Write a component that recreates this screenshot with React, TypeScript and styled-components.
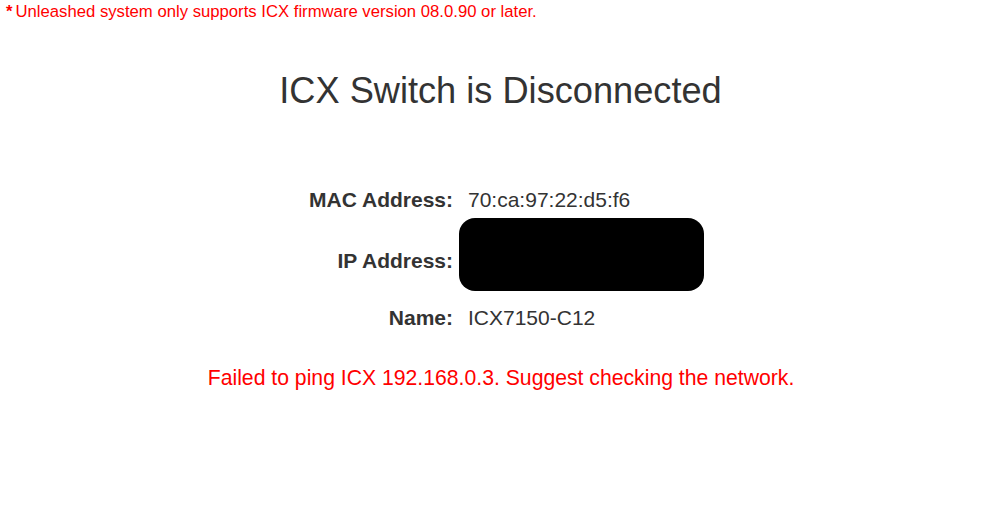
import React from "react";
import styled, { createGlobalStyle } from "styled-components";

const Global = createGlobalStyle`
  html, body { margin: 0; padding: 0; background: #fff; }
  body { font-family: "Liberation Sans", Arial, Helvetica, sans-serif; }
`;

const Page = styled.div`
  width: 998px;
  height: 512px;
  display: flex;
  flex-direction: column;
`;

const Note = styled.div`
  color: #ff0000;
  font-size: 16.7px;
  line-height: 20px;
  padding: 2px 0 0 6px;
  display: flex;
  gap: 3px;
`;

const Star = styled.span`
  font-weight: bold;
`;

const Title = styled.h1`
  margin: 48px 0 0;
  padding-left: 3px;
  text-align: center;
  font-size: 36.2px;
  line-height: 42px;
  font-weight: normal;
  color: #333;
`;

const Table = styled.div`
  margin-top: 72px;
  display: flex;
  flex-direction: column;
  align-items: center;
`;

const Row = styled.div<{ $h: number }>`
  display: flex;
  align-items: center;
  height: ${(p) => p.$h}px;
`;

const Label = styled.div<{ $shift?: number }>`
  width: 200px;
  text-align: right;
  font-weight: bold;
  font-size: 21px;
  color: #333;
  padding-top: ${(p) => p.$shift ?? 0}px;
`;

const Value = styled.div`
  width: 286px;
  margin-left: 6px;
  padding-left: 9px;
  box-sizing: border-box;
  font-size: 21px;
  color: #333;
`;

const RedactCell = styled.div`
  width: 286px;
  margin-left: 6px;
`;

const Redacted = styled.div`
  width: 245px;
  height: 73px;
  background: #000;
  border-radius: 16px;
`;

const Error = styled.div`
  margin-top: 22px;
  padding-left: 4px;
  text-align: center;
  color: #ff0000;
  font-size: 21.2px;
  line-height: 26px;
`;

export default function App() {
  return (
    <Page>
      <Global />
      <Note>
        <Star>*</Star>
        <span>Unleashed system only supports ICX firmware version 08.0.90 or later.</span>
      </Note>
      <Title>ICX Switch is Disconnected</Title>
      <Table>
        <Row $h={32}>
          <Label>MAC Address:</Label>
          <Value>70:ca:97:22:d5:f6</Value>
        </Row>
        <Row $h={77}>
          <Label $shift={13}>IP Address:</Label>
          <RedactCell>
            <Redacted />
          </RedactCell>
        </Row>
        <Row $h={50}>
          <Label>Name:</Label>
          <Value>ICX7150-C12</Value>
        </Row>
      </Table>
      <Error>Failed to ping ICX 192.168.0.3. Suggest checking the network.</Error>
    </Page>
  );
}
